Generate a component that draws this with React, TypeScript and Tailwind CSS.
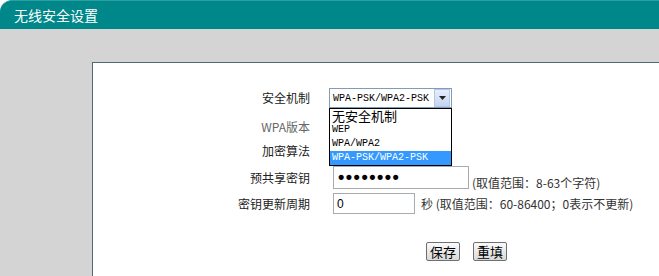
import React from 'react';

const cjk = '"Noto Sans CJK SC", "Liberation Sans", sans-serif';

const Row: React.FC<{ label: string; muted?: boolean; className?: string; children?: React.ReactNode }> = ({ label, muted, className, children }) => (
  <div className={`flex items-center ${className ?? ''}`}>
    <div className={`w-[218px] pr-[1px] text-right text-[12px] ${muted ? 'text-[#666]' : 'text-[#222]'}`}>{label}</div>
    <div className="flex items-center">{children}</div>
  </div>
);

const options = ['无安全机制', 'WEP', 'WPA/WPA2', 'WPA-PSK/WPA2-PSK'];

export default function App() {
  const [mode, setMode] = React.useState('WPA-PSK/WPA2-PSK');
  const [open, setOpen] = React.useState(true);
  const [period, setPeriod] = React.useState('0');

  return (
    <div className="w-[659px] h-[276px] overflow-hidden bg-white flex flex-col" style={{ fontFamily: cjk }}>
      <div className="h-[29px] shrink-0 bg-[#00878a] rounded-tl-[12px] border-t border-[#2aa0a3] flex items-center pl-[14px] text-white text-[14px]">
        无线安全设置
      </div>
      <div className="flex-1 bg-[#d4d4d4] pl-[92px] pt-[33px] flex">
        <div className="flex-1 bg-white border-t border-l border-[#4f6a72] pt-[25px]">
          <Row label="安全机制" className="h-[20px]">
            <div className="relative ml-[18px]">
              <button
                type="button"
                onClick={() => setOpen((v) => !v)}
                className="w-[123px] h-[20px] border border-[#7f9db9] bg-white flex items-center"
              >
                <span className="flex-1 text-left pl-[3px] text-[10px] text-black" style={{ fontFamily: '"Liberation Mono", monospace' }}>{mode}</span>
                <span className="w-[16px] h-[18px] mr-[1px] bg-gradient-to-b from-[#e6eefc] to-[#c4d4f0] border border-[#b6c7e6] flex items-center justify-center">
                  <svg width="7" height="4" viewBox="0 0 7 4"><path d="M0 0h7L3.5 4z" fill="#222" /></svg>
                </span>
              </button>
              {open ? (
                <div className="absolute left-0 top-[20px] w-[123px] border border-black bg-white z-10">
                  {options.map((o) => (
                    <div
                      key={o}
                      onClick={() => { setMode(o); setOpen(false); }}
                      className={`h-[14px] leading-[14px] pl-[2px] cursor-default ${o === mode ? 'bg-[#3399ff] text-white' : 'text-black'} ${o === '无安全机制' ? 'text-[13px]' : 'text-[10px]'}`}
                      style={{ fontFamily: o === '无安全机制' ? cjk : '"Liberation Mono", monospace' }}
                    >
                      {o}
                    </div>
                  ))}
                </div>
              ) : null}
            </div>
          </Row>
          <Row label="WPA版本" muted className="h-[24px] mt-[7px]" />
          <Row label="加密算法" className="h-[24px]" />
          <Row label="预共享密钥" className="h-[23px] mt-[3px]">
            <input
              readOnly
              value="••••••••"
              className="ml-[22px] w-[136px] h-[23px] border border-[#a5acb2] pl-[4px] text-[18px] font-bold tracking-[1.5px] text-black outline-none"
              style={{ fontFamily: '"Liberation Sans", sans-serif' }}
            />
            <span className="ml-[3px] mt-[10px] text-[12px] text-[#333]">(取值范围：8-63个字符)</span>
          </Row>
          <Row label="密钥更新周期" className="h-[21px] mt-[4px]">
            <input
              value={period}
              onChange={(e) => setPeriod(e.target.value)}
              className="ml-[22px] w-[82px] h-[21px] border border-[#a5acb2] px-[3px] text-[12px] text-black outline-none"
              style={{ fontFamily: '"Liberation Sans", sans-serif' }}
            />
            <span className="ml-[6px] text-[12px] text-[#333]">秒 (取值范围：60-86400；0表示不更新)</span>
          </Row>
          <div className="flex mt-[28px] pl-[333px] gap-[13px]">
            <button type="button" className="h-[19px] px-[3px] border border-[#6f6f6f] rounded-[2px] bg-gradient-to-b from-[#fafafa] to-[#d9d9d9] text-[13px] leading-[15px] text-black">保存</button>
            <button type="button" className="h-[19px] px-[3px] border border-[#6f6f6f] rounded-[2px] bg-gradient-to-b from-[#fafafa] to-[#d9d9d9] text-[13px] leading-[15px] text-black">重填</button>
          </div>
        </div>
      </div>
    </div>
  );
}
